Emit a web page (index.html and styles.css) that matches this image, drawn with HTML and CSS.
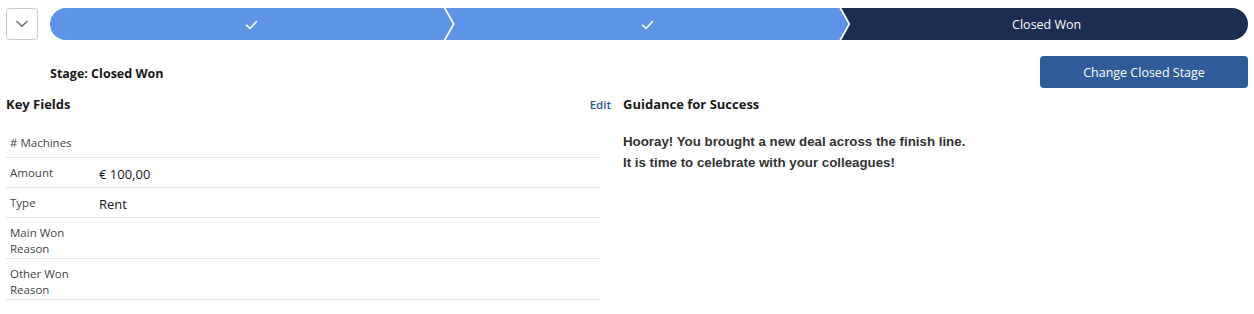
FILE: index.html
```html
<!DOCTYPE html>
<html lang="en">
<head>
<meta charset="utf-8">
<title>Path</title>
<link rel="stylesheet" href="styles.css">
</head>
<body>
<div class="page">
  <div class="top">
    <button class="toggle" aria-label="Collapse">
      <svg width="12" height="8" viewBox="0 0 12 8"><path d="M1 1.5 L6 6.2 L11 1.5" fill="none" stroke="#706e6b" stroke-width="1.5" stroke-linecap="round" stroke-linejoin="round"/></svg>
    </button>
    <div class="path">
      <div class="stage stage-first done">
        <svg class="check" width="13" height="10" viewBox="0 0 13 10"><path d="M1.5 5.2 L5 8.5 L11.5 1.5" fill="none" stroke="#fff" stroke-width="1.6" stroke-linecap="round" stroke-linejoin="round"/></svg>
      </div>
      <div class="stage stage-mid done">
        <svg class="check" width="13" height="10" viewBox="0 0 13 10"><path d="M1.5 5.2 L5 8.5 L11.5 1.5" fill="none" stroke="#fff" stroke-width="1.6" stroke-linecap="round" stroke-linejoin="round"/></svg>
      </div>
      <div class="stage stage-last current">Closed Won</div>
    </div>
  </div>

  <div class="stage-row">
    <div class="stage-label">Stage: Closed Won</div>
    <button class="change-btn">Change Closed Stage</button>
  </div>

  <div class="content">
    <div class="key-fields">
      <div class="kf-head">
        <h2 class="section-title">Key Fields</h2>
        <a class="edit" href="#">Edit</a>
      </div>
      <div class="fields">
        <div class="field"><div class="label"># Machines</div><div class="value"></div></div>
        <div class="field"><div class="label">Amount</div><div class="value">€ 100,00</div></div>
        <div class="field"><div class="label">Type</div><div class="value">Rent</div></div>
        <div class="field"><div class="label">Main Won<br>Reason</div><div class="value"></div></div>
        <div class="field"><div class="label">Other Won<br>Reason</div><div class="value"></div></div>
      </div>
    </div>
    <div class="guidance">
      <h2 class="section-title">Guidance for Success</h2>
      <p class="guide-text">Hooray! You brought a new deal across the finish line.<br>It is time to celebrate with your colleagues!</p>
    </div>
  </div>
</div>
</body>
</html>
```

FILE: styles.css
```css
* { box-sizing: border-box; }
html, body { margin: 0; padding: 0; background: #fff; }
body {
  font-family: "Open Sans", "Noto Sans", "Liberation Sans", sans-serif;
  color: #181818;
}
.page { padding: 8px 6px 0 6px; }

.top { display: flex; align-items: center; gap: 12px; }
.toggle {
  width: 32px; height: 32px; flex: 0 0 32px;
  border: 1px solid #c9c9c9; border-radius: 4px; background: #fff;
  display: flex; align-items: center; justify-content: center; padding: 0;
}
.path {
  flex: 1; display: flex; height: 32px;
  border-radius: 16px; overflow: hidden;
}
.stage {
  flex: 1 1 0; height: 32px;
  display: flex; align-items: center; justify-content: center;
  color: #fff; font-size: 12.5px;
}
.stage + .stage { margin-left: -7px; }
.done { background: #5e94e5; }
.current { background: #1b2d50; }
.stage-first { clip-path: polygon(0 0, calc(100% - 9px) 0, 100% 50%, calc(100% - 9px) 100%, 0 100%); }
.stage-mid { clip-path: polygon(0 0, calc(100% - 9px) 0, 100% 50%, calc(100% - 9px) 100%, 0 100%, 9px 50%); }
.stage-last { clip-path: polygon(0 0, 100% 0, 100% 100%, 0 100%, 9px 50%); padding-left: 4px; }
.check { margin-top: 1px; }

.stage-row {
  display: flex; align-items: center; justify-content: space-between;
  margin-top: 16px; padding-left: 44px;
}
.stage-label { font-weight: 700; font-size: 12.5px; color: #181818; padding-top: 2px; }
.change-btn {
  width: 208px; height: 32px;
  background: #305b99; color: #fff; border: 0; border-radius: 4px;
  font-family: inherit; font-size: 12.5px;
}

.content { display: flex; gap: 12px; margin-top: 6px; }
.key-fields { width: 605px; }
.kf-head { display: flex; justify-content: space-between; align-items: center; height: 20px; }
.section-title { margin: 0; font-size: 13px; font-weight: 700; color: #181818; line-height: 20px; }
.edit { color: #2c5595; font-size: 11.5px; font-weight: 600; text-decoration: none; }

.fields { margin-top: 14px; width: 594px; }
.field {
  display: flex; align-items: flex-start;
  min-height: 30px; border-bottom: 1px solid #e2e2e2;
  padding: 7px 0 1px 4px;
}
.label { width: 89px; font-size: 11.5px; line-height: 16px; color: #444; }
.value { font-size: 13px; line-height: 18px; color: #181818; }

.guidance { flex: 1; }
.guide-text {
  margin: 17px 0 0 0;
  font-family: "Liberation Sans", Arial, sans-serif;
  font-weight: 700; font-size: 13.3px; line-height: 21px; color: #333;
}
```
